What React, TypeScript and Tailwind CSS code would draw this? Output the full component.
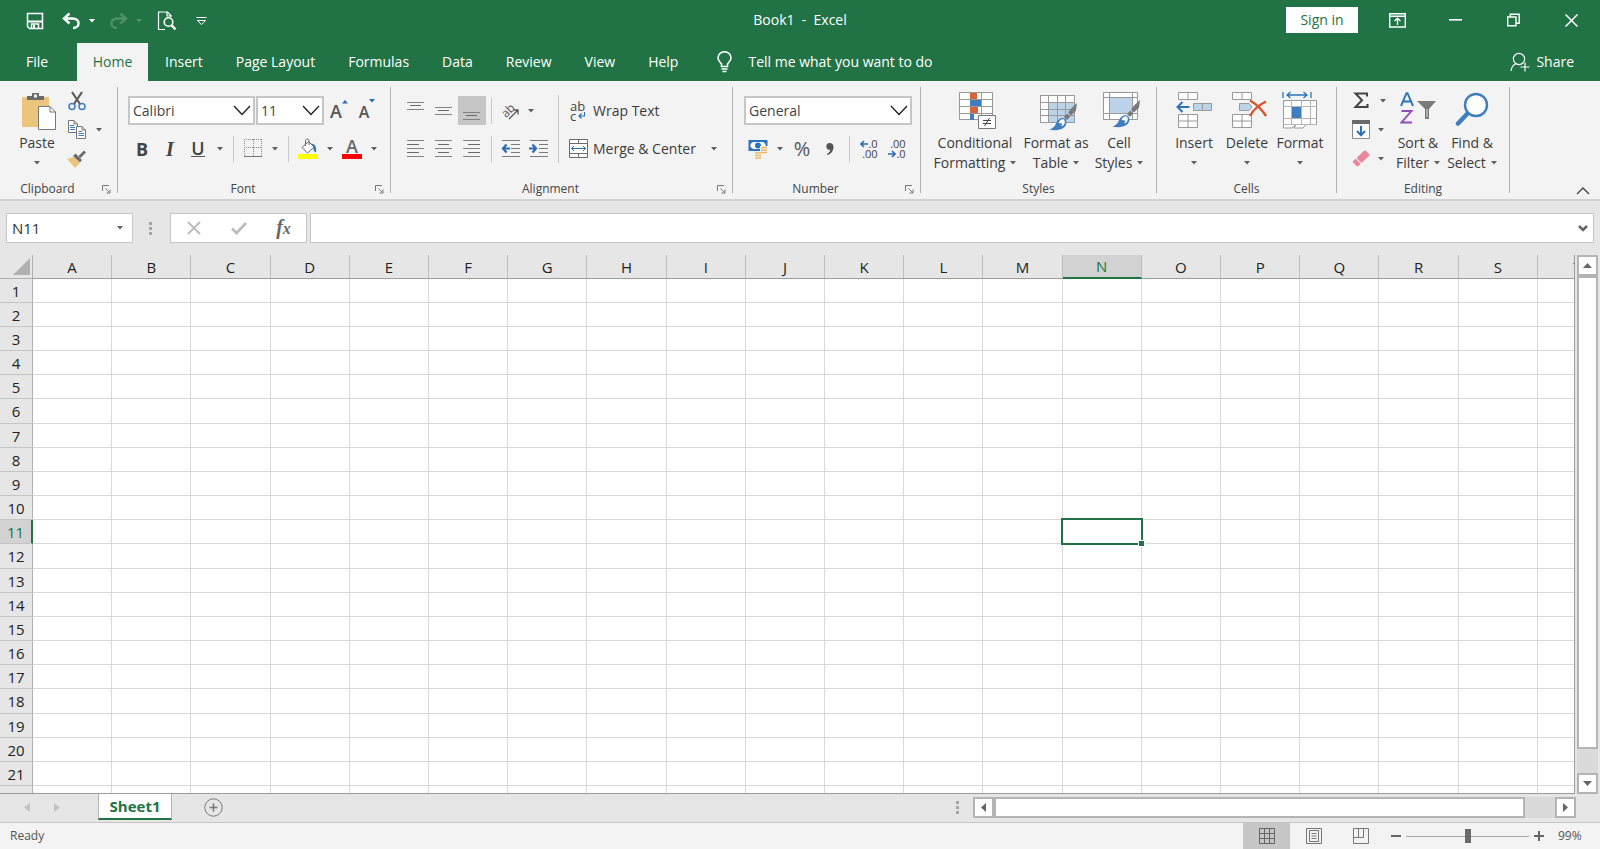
import type { ReactNode } from "react";
import clsx from "clsx";

const TABS = ["Insert", "Page Layout", "Formulas", "Data", "Review", "View", "Help"];
const COLUMNS = "ABCDEFGHIJKLMNOPQRS".split("");
const ROWS = Array.from({ length: 22 }, (_, i) => i + 1);
const SELECTED = { col: "N", row: 11 };

interface GroupProps {
    label: string;
    width: string;
    launcher?: boolean;
    children: ReactNode;
}

interface IconButtonProps {
    label: string;
    active?: boolean;
    children: ReactNode;
}

function Caret({ className = "text-[#5f5f5f]" }: { className?: string }) {
    return (
        <svg width="6" height="4" viewBox="0 0 6 4" className={clsx("shrink-0", className)}>
            <path d="M0 0H6L3 3.5Z" fill="currentColor" />
        </svg>
    );
}

function DropButton({ label, width = "w-4" }: { label: string; width?: string }) {
    return (
        <button aria-label={label} className={clsx("flex h-full shrink-0 items-center justify-center", width)}>
            <Caret />
        </button>
    );
}

function IconButton({ label, active, children }: IconButtonProps) {
    return (
        <button
            aria-label={label}
            className={clsx("flex h-full w-7 shrink-0 items-center justify-center", active && "bg-[#c6c6c6]")}
        >
            {children}
        </button>
    );
}

function Divider() {
    return <div className="mx-[5px] h-[26px] w-px shrink-0 bg-[#c8c8c8]" />;
}

function Group({ label, width, launcher, children }: GroupProps) {
    return (
        <section aria-label={label} className={clsx("flex shrink-0", width)}>
            <div className="flex min-w-0 flex-1 flex-col">
                <div className="flex h-[98px]">{children}</div>
                <div className="flex h-5 items-center">
                    <span className="flex-1 text-center text-xs text-[#444]">{label}</span>
                    {launcher && (
                        <button aria-label={`${label} settings`} className="flex w-[22px] justify-center">
                            <svg width="9" height="9" viewBox="0 0 9 9" fill="none" stroke="#777">
                                <path d="M.5 6V.5H7M3.5 3.5L7.5 7.5M8 4.5V8H4.5" />
                            </svg>
                        </button>
                    )}
                </div>
            </div>
            <div className="my-1.5 w-px bg-[#b0b0b0]" />
        </section>
    );
}

interface BigButtonProps {
    lines: string[];
    width: string;
    children: ReactNode;
}

function BigButton({ lines, width, children }: BigButtonProps) {
    return (
        <button className={clsx("flex shrink-0 flex-col items-center pt-2.5 text-sm leading-5 text-[#3b3b3b]", width)}>
            <span className="flex h-[42px] items-start">{children}</span>
            <span className="whitespace-nowrap">{lines[0]}</span>
            <span className="flex h-5 items-center gap-[5px] whitespace-nowrap">
                {lines[1]}
                <Caret />
            </span>
        </button>
    );
}

interface ComboProps {
    label: string;
    value: string;
    width: string;
}

function Combo({ label, value, width }: ComboProps) {
    return (
        <div className={clsx("relative h-full shrink-0", width)}>
            <select
                aria-label={label}
                defaultValue={value}
                className="h-full w-full appearance-none border-2 border-[#c6c6c6] bg-white px-[3px] text-sm text-[#444] outline-none"
            >
                <option>{value}</option>
            </select>
            <svg
                width="18"
                height="11"
                viewBox="0 0 18 11"
                fill="none"
                stroke="#222"
                strokeWidth="1.4"
                className="pointer-events-none absolute top-[9px] right-1"
            >
                <path d="M1 1L9 9.4L17 1" />
            </svg>
        </div>
    );
}

// Horizontal strokes given as [x1, x2, y]
function Lines({ lines }: { lines: number[][] }) {
    return (
        <svg width="18" height="20" viewBox="0 0 18 20">
            {lines.map(([a, b, y], i) => (
                <rect key={i} x={a} y={y} width={b - a} height="1" fill={i % 2 ? "#6a6a6a" : "#828282"} />
            ))}
        </svg>
    );
}

function IndentIcon({ out }: { out?: boolean }) {
    return (
        <svg width="20" height="20" viewBox="0 0 20 20" fill="#7c7c7c">
            <path d="M1 1H19V2H1ZM10 5H19V6H10ZM10 9H19V10H10ZM10 13H19V14H10ZM1 17H19V18H1Z" />
            <path
                d={out ? "M9 9.5H2M5.5 5.5L2 9.5L5.5 13.5" : "M0 9.5H7M3.5 5.5L7 9.5L3.5 13.5"}
                fill="none"
                stroke="#2b6cb0"
                strokeWidth="2.2"
            />
        </svg>
    );
}

function PaintBrush() {
    return (
        <g>
            <path d="M37 9L31.5 14L28 18.5L31 21.5L36 16.5Z" fill="#7a7a7a" />
            <path d="M27.3 19.4L23.8 23L27 26L30.2 22.4Z" fill="#7a7a7a" />
            <path d="M23 24C20 24 17.5 26 16.2 29C15 32 13 34.5 9.5 35.8C16 37 22 36 25 32.5C27.5 29.5 27 25.5 23 24Z" fill="#3f7dbf" />
            <path d="M23 25C20.8 25.2 19.3 26.8 18.5 29L22 29.5L21.5 32.5C24.5 31.5 26.5 27.5 23 25Z" fill="#fff" />
        </g>
    );
}

function SmallArrowText({ out }: { out?: boolean }) {
    const arrow = (
        <svg width="8" height="8" viewBox="0 0 8 8" fill="none" stroke="#2b6cb0" strokeWidth="1.6">
            <path d={out ? "M0 4H7M4 1L7 4L4 7" : "M8 4H1M4 1L1 4L4 7"} />
        </svg>
    );
    return (
        <span className="flex flex-col items-end text-[11px] leading-[10px] text-[#444]">
            <span className="flex items-center">{out ? ".00" : <>{arrow}.0</>}</span>
            <span className="flex items-center">{out ? <>{arrow}.0</> : ".00"}</span>
        </span>
    );
}

function TitleBar() {
    return (
        <div className="flex h-[43px] items-start justify-between text-white">
            <div className="flex h-[42px] flex-1 items-center">
                <button aria-label="Save" className="ml-[25px] flex w-5 justify-center">
                    <svg width="18" height="18" viewBox="0 0 18 18" fill="none" stroke="#fff" strokeWidth="1.5">
                        <path d="M1.5 1.5H16.5V16.5H3.5L1.5 14.5Z" />
                        <path d="M2 9.5H16" strokeWidth="2" />
                        <path d="M5.5 16.5V12H12.5V16.5" />
                        <path d="M8 13V16.5" strokeWidth="2" />
                    </svg>
                </button>
                <button aria-label="Undo" className="ml-4 flex w-5 justify-center">
                    <svg width="19" height="18" viewBox="0 0 19 18" fill="none" stroke="#fff" strokeWidth="2.4">
                        <path d="M7.5 1.5L2 6.5L7.5 11.5M2 6.5H10.5C18.5 6.5 18.5 15.8 11 16" />
                    </svg>
                </button>
                <button aria-label="Undo history" className="ml-[7px] flex w-2 justify-center">
                    <Caret className="text-white" />
                </button>
                <button aria-label="Redo" className="ml-3 flex w-5 justify-center text-[#4f9069]">
                    <svg width="19" height="18" viewBox="0 0 19 18" fill="none" stroke="currentColor" strokeWidth="2.4">
                        <path d="M11.5 1.5L17 6.5L11.5 11.5M17 6.5H8.5C.5 6.5 .5 15.8 8 16" />
                    </svg>
                </button>
                <button aria-label="Redo history" className="ml-[7px] flex w-2 justify-center">
                    <Caret className="text-[#4f9069]" />
                </button>
                <button aria-label="Print preview" className="ml-3.5 flex w-5 justify-center">
                    <svg width="20" height="20" viewBox="0 0 20 20" fill="none" stroke="#fff">
                        <path d="M8 18.5H1.5V1H10.5L14 4.5V6M10 1V5H14" strokeWidth="1.2" />
                        <circle cx="11.5" cy="11" r="4.3" strokeWidth="1.6" />
                        <path d="M14.5 14.2L18.5 18.4" strokeWidth="2.4" />
                    </svg>
                </button>
                <button aria-label="Customize toolbar" className="ml-[18px] flex w-3 justify-center">
                    <svg width="11" height="9" viewBox="0 0 11 9" fill="none" stroke="#fff">
                        <path d="M.5 .5H10.5M1.5 3.5H9.5L5.5 7.7Z" />
                    </svg>
                </button>
            </div>
            <h1 className="text-sm leading-10 whitespace-pre">Book1  -  Excel</h1>
            <div className="flex h-10 flex-1 items-center justify-end">
                <button className="mr-2.5 h-[26px] w-[72px] bg-white text-sm text-[#217346]">Sign in</button>
                <button aria-label="Ribbon display options" className="flex w-[58px] justify-center">
                    <svg width="17" height="15" viewBox="0 0 17 15" fill="none" stroke="#fff" strokeWidth="1.4">
                        <path d="M.7 .7H16.3V14H.7ZM.7 3.2H16.3M8.5 12V5.5M5.5 8L8.5 5.3L11.5 8" />
                    </svg>
                </button>
                <button aria-label="Minimize" className="flex w-[58px] justify-center">
                    <svg width="13" height="2" viewBox="0 0 13 2">
                        <rect width="13" height="1.6" fill="#fff" />
                    </svg>
                </button>
                <button aria-label="Restore" className="flex w-[58px] justify-center">
                    <svg width="13" height="14" viewBox="0 0 13 14" fill="none" stroke="#fff" strokeWidth="1.4">
                        <path d="M.7 4H9V12.7H.7ZM3.2 4V1.2H12.2V10.2H9" />
                    </svg>
                </button>
                <button aria-label="Close" className="flex w-[58px] justify-center">
                    <svg width="13" height="13" viewBox="0 0 13 13" stroke="#fff" strokeWidth="1.5">
                        <path d="M.5 .5L12.5 12.5M12.5 .5L.5 12.5" />
                    </svg>
                </button>
            </div>
        </div>
    );
}

function TabBar() {
    return (
        <nav className="flex h-[38px] items-stretch gap-px text-sm text-white">
            <button className="w-[74px]">File</button>
            <button className="ml-0.5 w-[71px] bg-[#f3f3f3] text-[#217346]">Home</button>
            {TABS.map((tab) => (
                <button key={tab} className="px-4 whitespace-nowrap">
                    {tab}
                </button>
            ))}
            <button className="ml-[22px] flex items-center gap-4">
                <svg width="15" height="22" viewBox="0 0 15 22" fill="none" stroke="#fff" strokeWidth="1.6">
                    <path d="M4.5 15.5V13C3.5 11.3 1 10 1 7A6.4 6.2 0 0 1 14 7C14 10 11.5 11.3 10.5 13V15.5Z" />
                    <path d="M4.5 18H10.5M5.5 20.5H9.5" />
                </svg>
                Tell me what you want to do
            </button>
            <button className="mr-[26px] ml-auto flex items-center gap-1.5">
                <svg width="20" height="20" viewBox="0 0 20 20" fill="none" stroke="#fff" strokeWidth="1.2">
                    <circle cx="9" cy="7" r="5.6" />
                    <path d="M1 19C1.5 15 3 13 5.5 12M15 10.5V19.5M10.5 15H19.5" />
                </svg>
                Share
            </button>
        </nav>
    );
}

function ClipboardGroup() {
    return (
        <Group label="Clipboard" width="w-[118px]" launcher>
            <div className="pl-3.5">
                <BigButton lines={["Paste"]} width="w-[46px]">
                    <svg width="36" height="40" viewBox="0 0 36 40" className="ml-1">
                        <path d="M1 6H28V36H1Z" fill="#ecc57c" />
                        <path d="M6 9V5H11V2H18V5H23V9Z" fill="#6b6b6b" />
                        <rect x="13" y="3.5" width="3" height="3" fill="#f3f3f3" />
                        <path d="M17.5 15.5H29L34.5 21V38.5H17.5Z" fill="#fff" stroke="#777" />
                        <path d="M29 15.5V21H34.5" fill="none" stroke="#777" />
                    </svg>
                </BigButton>
            </div>
            <div className="flex flex-col pt-[5px] pl-[3px]">
                <div className="flex h-[29px]">
                    <IconButton label="Cut">
                        <svg width="18" height="20" viewBox="0 0 18 20" fill="none">
                            <path d="M4 1L12 13M14 1L6 13" stroke="#5a5a5a" strokeWidth="2.2" />
                            <circle cx="4" cy="15.5" r="3" stroke="#3f7dbf" strokeWidth="1.5" />
                            <circle cx="14" cy="15.5" r="3" stroke="#3f7dbf" strokeWidth="1.5" />
                        </svg>
                    </IconButton>
                </div>
                <div className="flex h-[29px]">
                    <IconButton label="Copy">
                        <svg width="18" height="19" viewBox="0 0 18 19" fill="#fff" stroke="#777">
                            <path d="M.5 .5H6L9.5 4V12.5H.5ZM6 .5V4H9.5" />
                            <path d="M8.5 6.5H14L17.5 10V18.5H8.5ZM14 6.5V10H17.5" />
                            <path d="M2 5.5H6M2 7.5H7M2 9.5H7M10.5 11.5H14M10.5 13.5H16M10.5 15.5H16" stroke="#3f7dbf" />
                        </svg>
                    </IconButton>
                    <DropButton label="Copy options" />
                </div>
                <div className="flex h-[29px]">
                    <IconButton label="Format Painter">
                        <svg width="20" height="18" viewBox="0 0 20 18">
                            <path d="M0 9L7 7L13 13L8 18Z" fill="#ecc57c" />
                            <path d="M6 6L8.5 3.5L15 10L13 12.5Z" fill="#6b6b6b" />
                            <path d="M11.5 6L17 0.5L19 2.5L13.5 8Z" fill="#6b6b6b" />
                        </svg>
                    </IconButton>
                </div>
            </div>
        </Group>
    );
}

function FontGroup() {
    return (
        <Group label="Font" width="w-[273px]" launcher>
            <div className="flex flex-col gap-[9px] pt-[15px] pl-2.5 text-[#444]">
                <div className="flex h-[29px] items-center">
                    <Combo label="Font" value="Calibri" width="w-[127px]" />
                    <div className="ml-px h-full">
                        <Combo label="Font size" value="11" width="w-[68px]" />
                    </div>
                    <IconButton label="Increase font size">
                        <span className="relative pr-1 text-lg leading-7 font-semibold text-[#555]">
                            A
                            <svg width="6" height="4" viewBox="0 0 6 4" className="absolute top-[3px] -right-0.5">
                                <path d="M0 3.5H6L3 0Z" fill="#2b6cb0" />
                            </svg>
                        </span>
                    </IconButton>
                    <IconButton label="Decrease font size">
                        <span className="relative pt-0.5 pr-1 text-base leading-7 font-semibold text-[#555]">
                            A
                            <svg width="6" height="4" viewBox="0 0 6 4" className="absolute top-[3px] -right-0.5">
                                <path d="M0 0H6L3 3.5Z" fill="#2b6cb0" />
                            </svg>
                        </span>
                    </IconButton>
                </div>
                <div className="flex h-[29px] items-center">
                    <IconButton label="Bold">
                        <span className="text-lg leading-5 font-bold">B</span>
                    </IconButton>
                    <IconButton label="Italic">
                        <span className="font-['Liberation_Serif',serif] text-xl leading-5 font-bold italic">I</span>
                    </IconButton>
                    <IconButton label="Underline">
                        <span className="border-b border-[#555] text-lg leading-4 font-semibold">U</span>
                    </IconButton>
                    <DropButton label="Underline options" />
                    <Divider />
                    <IconButton label="Borders">
                        <svg
                            width="18"
                            height="19"
                            viewBox="0 0 18 19"
                            fill="none"
                            stroke="#8a8a8a"
                            shapeRendering="crispEdges"
                        >
                            <path d="M0 .5H18M0 8.5H18M.5 0V17M9.5 0V17M17.5 0V17" strokeDasharray="1 1" />
                            <path d="M0 17.5H18" stroke="#777" />
                        </svg>
                    </IconButton>
                    <DropButton label="Border options" />
                    <Divider />
                    <IconButton label="Fill color">
                        <svg width="20" height="21" viewBox="0 0 20 21">
                            <path d="M4 9.5L10.5 3.5L16 9L9.5 15Z" fill="#fff" stroke="#666" />
                            <path d="M7.5 8V2.5C7.5 .5 11 .5 11 2.5V7" fill="none" stroke="#666" />
                            <path d="M13 5.5C17 6 18.8 8.5 18 14.5C15.5 13.5 15 11 16 9Z" fill="#2f75b5" />
                            <rect y="16" width="20" height="5" fill="#ff0" />
                        </svg>
                    </IconButton>
                    <DropButton label="Fill color options" />
                    <IconButton label="Font color">
                        <span className="w-5 border-b-[5px] border-[#f00] text-center text-lg leading-4 font-semibold text-[#666]">
                            A
                        </span>
                    </IconButton>
                    <DropButton label="Font color options" />
                </div>
            </div>
        </Group>
    );
}

function AlignmentGroup() {
    return (
        <Group label="Alignment" width="w-[342px]" launcher>
            <div className="flex flex-col gap-[9px] pt-[15px] pl-[11px]">
                <div className="flex h-[29px] items-center">
                    <IconButton label="Top align">
                        <Lines lines={[[0, 17, 1], [3, 14, 4], [0, 17, 8]]} />
                    </IconButton>
                    <IconButton label="Middle align">
                        <Lines lines={[[0, 17, 6], [3, 14, 9], [0, 17, 13]]} />
                    </IconButton>
                    <IconButton label="Bottom align" active>
                        <Lines lines={[[0, 17, 11], [3, 14, 14], [0, 17, 18]]} />
                    </IconButton>
                    <Divider />
                    <IconButton label="Orientation">
                        <svg width="20" height="20" viewBox="0 0 20 20" fill="none" stroke="#555">
                            <text x="1" y="14" fontSize="12" fill="#555" stroke="none" transform="rotate(-45 7 11)">
                                ab
                            </text>
                            <path d="M8 18L17 9M12.5 9H17V13.5" strokeWidth="1.3" />
                        </svg>
                    </IconButton>
                    <DropButton label="Orientation options" width="w-3" />
                </div>
                <div className="flex h-[29px] items-center">
                    <IconButton label="Align left">
                        <Lines lines={[[0, 17, 1], [0, 12, 5], [0, 17, 9], [0, 12, 13], [0, 17, 17]]} />
                    </IconButton>
                    <IconButton label="Center">
                        <Lines lines={[[0, 17, 1], [3, 14, 5], [0, 17, 9], [3, 14, 13], [0, 17, 17]]} />
                    </IconButton>
                    <IconButton label="Align right">
                        <Lines lines={[[0, 17, 1], [5, 17, 5], [0, 17, 9], [5, 17, 13], [0, 17, 17]]} />
                    </IconButton>
                    <Divider />
                    <IconButton label="Decrease indent">
                        <IndentIcon out />
                    </IconButton>
                    <IconButton label="Increase indent">
                        <IndentIcon />
                    </IconButton>
                </div>
            </div>
            <div className="mx-[5px] mt-3.5 h-[68px] w-px bg-[#c8c8c8]" />
            <div className="flex flex-col gap-[9px] pt-[15px] text-sm text-[#3b3b3b]">
                <button className="flex h-[29px] items-center">
                    <span className="flex w-7 flex-col pl-1.5 text-left text-[13px] leading-[10px] text-[#444]">
                        <span>ab</span>
                        <span className="flex items-center">
                            c
                            <svg width="7" height="7" viewBox="0 0 7 7" fill="none" stroke="#2b6cb0" className="ml-0.5">
                                <path d="M6.5 0V4H1M3.5 1.5L1 4L3.5 6.5" strokeWidth="1.2" />
                            </svg>
                        </span>
                    </span>
                    <span className="pl-px whitespace-nowrap">Wrap Text</span>
                </button>
                <div className="flex h-[29px] items-center">
                    <button className="flex h-full items-center">
                        <span className="flex w-7 justify-center">
                            <svg width="19" height="19" viewBox="0 0 19 19" fill="#fff" stroke="#6a6a6a">
                                <path d="M.5 .5H18.5V18.5H.5ZM.5 4.5H18.5M.5 14.5H18.5M9.5 .5V4.5M9.5 14.5V18.5" />
                                <path d="M2.5 9.5H16.5M5 7L2.5 9.5L5 12M14 7L16.5 9.5L14 12" fill="none" stroke="#2b6cb0" />
                            </svg>
                        </span>
                        <span className="pl-px whitespace-nowrap">Merge &amp; Center</span>
                    </button>
                    <div className="ml-2.5 h-full">
                        <DropButton label="Merge options" />
                    </div>
                </div>
            </div>
        </Group>
    );
}

function NumberGroup() {
    return (
        <Group label="Number" width="w-[188px]" launcher>
            <div className="flex flex-col gap-[9px] pt-[15px] pl-[11px] text-[#555]">
                <div className="h-[29px]">
                    <Combo label="Number format" value="General" width="w-[168px]" />
                </div>
                <div className="flex h-[29px] items-center">
                    <IconButton label="Accounting format">
                        <svg width="20" height="20" viewBox="0 0 20 20">
                            <path d="M.5 1H19.5V12H.5Z" fill="#2b74bd" />
                            <path d="M5 3H15L17.5 5V8L15 10H5L2.5 8V5Z" fill="#fff" />
                            <circle cx="10" cy="6.5" r="3" fill="#2b74bd" />
                            <path d="M12 7H20V16H14V20H6V12.5H12Z" fill="#f3f3f3" />
                            <path d="M13 8.5H19M13 11H19M13 13.5H19M7 14H13M7 16.5H13M7.5 19H13" stroke="#e9b968" strokeWidth="1.6" />
                        </svg>
                    </IconButton>
                    <DropButton label="Accounting options" />
                    <IconButton label="Percent style">
                        <span className="text-xl leading-6">%</span>
                    </IconButton>
                    <IconButton label="Comma style">
                        <svg width="8" height="12" viewBox="0 0 8 12">
                            <path d="M3.5 0C6 0 7.5 1.5 7.5 4C7.5 8 5 11 1.5 12L1 11C3 10 4.2 8.5 4.2 6.8C2 7.2 .3 5.5 .3 3.4C.3 1.5 1.6 0 3.5 0Z" fill="#555" />
                        </svg>
                    </IconButton>
                    <Divider />
                    <IconButton label="Increase decimal">
                        <SmallArrowText />
                    </IconButton>
                    <IconButton label="Decrease decimal">
                        <SmallArrowText out />
                    </IconButton>
                </div>
            </div>
        </Group>
    );
}

function StylesGroup() {
    return (
        <Group label="Styles" width="w-[236px]">
            <div className="flex pl-2">
                <BigButton lines={["Conditional", "Formatting"]} width="w-[92px]">
                    <svg width="38" height="38" viewBox="0 0 38 38" fill="none" stroke="#999" className="ml-1.5">
                        <path d="M.5 1.5H33.5V28.5H.5Z" fill="#fff" />
                        <path d="M.5 8.5H33.5M.5 15.5H33.5M.5 22.5H33.5M11.5 1.5V28.5M22.5 1.5V28.5" />
                        <g stroke="none">
                            <rect x="11" y="2" width="7" height="6" fill="#d9623b" />
                            <rect x="11" y="9" width="11" height="6" fill="#3f7dbf" />
                            <rect x="11" y="16" width="8" height="6" fill="#d9623b" />
                            <rect x="11" y="23" width="4" height="6" fill="#3f7dbf" />
                        </g>
                        <path d="M19.5 24.5H36.5V37.5H19.5Z" fill="#fff" stroke="#777" />
                        <path d="M24 29.5H32M24 32.5H32M30.5 27L25.5 35" stroke="#444" />
                    </svg>
                </BigButton>
                <BigButton lines={["Format as", "Table"]} width="w-[70px]">
                    <svg width="38" height="40" viewBox="0 0 38 40" fill="none" stroke="#999" className="ml-1.5">
                        <path d="M.5 4.5H34.5V31.5H.5Z" fill="#fff" />
                        <path d="M9 11H34.5V31.5H9Z" fill="#bdd3ea" stroke="none" />
                        <path d="M.5 4.5H34.5V31.5H.5ZM.5 11.5H34.5M.5 18.5H34.5M.5 24.5H34.5M8.5 4.5V31.5M17.5 4.5V31.5M25.5 4.5V31.5" />
                        <g stroke="none" transform="translate(0 3)">
                            <PaintBrush />
                        </g>
                    </svg>
                </BigButton>
                <BigButton lines={["Cell", "Styles"]} width="w-14">
                    <svg width="38" height="38" viewBox="0 0 38 38" fill="none" stroke="#999" className="ml-1.5">
                        <path d="M.5 1.5H34.5V28.5H.5Z" fill="#fff" />
                        <path d="M7 7H29V22H7Z" fill="#bdd3ea" stroke="none" />
                        <path d="M.5 6.5H34.5M.5 22.5H34.5M6.5 1.5V28.5M29.5 1.5V28.5" />
                        <g stroke="none">
                            <PaintBrush />
                        </g>
                    </svg>
                </BigButton>
            </div>
        </Group>
    );
}

function CellsGroup() {
    return (
        <Group label="Cells" width="w-[180px]">
            <div className="flex pl-[13px]">
                <BigButton lines={["Insert"]} width="w-12">
                    <svg width="36" height="38" viewBox="0 0 36 38" fill="#fff" stroke="#999">
                        <path d="M2.5 1.5H21.5V8.5H2.5ZM12 1.5V8.5M2.5 23.5H21.5V36.5H2.5ZM2.5 30H21.5M12 23.5V36.5" />
                        <path d="M17.5 12.5H35.5V19.5H17.5ZM26.5 12.5V19.5" fill="#bdd3ea" />
                        <path d="M13.5 16H2M6.5 11L1.5 16L6.5 21" fill="none" stroke="#2b74bd" strokeWidth="2" />
                    </svg>
                </BigButton>
                <BigButton lines={["Delete"]} width="w-[58px]">
                    <svg width="36" height="38" viewBox="0 0 36 38" fill="#fff" stroke="#999" className="ml-1">
                        <path d="M1.5 1.5H20.5V8.5H1.5ZM11 1.5V8.5M1.5 23.5H20.5V36.5H1.5ZM1.5 30H20.5M11 23.5V36.5" />
                        <path d="M8.5 12.5H18L21 16L18 19.5H8.5Z" fill="#bdd3ea" />
                        <path d="M19 9.5C25 13 31 18.5 35 25M35 10.5C29 13.5 22 19 19 25" fill="none" stroke="#d9552f" strokeWidth="2.4" />
                    </svg>
                </BigButton>
                <BigButton lines={["Format"]} width="w-12">
                    <svg width="36" height="38" viewBox="0 0 36 38" fill="none" stroke="#999">
                        <path d="M1 1V7M29 1V7M5 4H25M8.5 1L5 4L8.5 7M21.5 1L25 4L21.5 7" stroke="#2b74bd" strokeWidth="1.3" />
                        <path d="M1.5 9.5H34.5V33.5H24L21 37H12L14 33.5L10 37H1.5Z" fill="#fff" />
                        <path d="M1.5 15.5H34.5M1.5 27.5H34.5M1.5 33.5H34.5M9.5 9.5V33.5M19.5 9.5V33.5M28.5 9.5V33.5" stroke="#b4b4b4" />
                        <rect x="10" y="16" width="9" height="11" fill="#3f7dbf" stroke="none" />
                    </svg>
                </BigButton>
            </div>
        </Group>
    );
}

function EditingGroup() {
    return (
        <Group label="Editing" width="w-[173px]">
            <div className="flex flex-col pt-[5px] pl-2.5">
                <div className="flex h-[29px]">
                    <IconButton label="AutoSum">
                        <svg width="16" height="17" viewBox="0 0 16 17" fill="none" stroke="#444" strokeWidth="2">
                            <path d="M14 4.5V1.5H2.5L9 8.2L2.5 15H14.5V12" />
                        </svg>
                    </IconButton>
                    <DropButton label="AutoSum options" />
                </div>
                <div className="flex h-[29px]">
                    <IconButton label="Fill">
                        <svg width="18" height="19" viewBox="0 0 18 19" fill="#fff" stroke="#8a8a8a">
                            <path d="M.5 .5H17.5V18.5H.5Z" />
                            <rect width="18" height="4" fill="#6b6b6b" stroke="none" />
                            <path d="M9 6V15M5 11L9 15.2L13 11" fill="none" stroke="#2b74bd" strokeWidth="2" />
                        </svg>
                    </IconButton>
                    <DropButton label="Fill options" width="w-3" />
                </div>
                <div className="flex h-[29px]">
                    <IconButton label="Clear">
                        <svg width="18" height="17" viewBox="0 0 18 17" fill="#e8899b">
                            <path d="M4.5 8L12 .8Q13 0 14 .8L17 4Q17.6 5 17 6L9.5 13Z" />
                            <path d="M3.7 8.8L8.7 13.8L6.5 16Q5.5 16.8 4.5 16L1 12.5Q.3 11.5 1.2 10.8Z" />
                        </svg>
                    </IconButton>
                    <DropButton label="Clear options" width="w-3" />
                </div>
            </div>
            <div className="flex pl-1">
                <BigButton lines={["Sort &", "Filter"]} width="w-[46px]">
                    <svg width="36" height="36" viewBox="0 0 36 36" fill="none">
                        <path d="M1 15L6.5 2.2H7.5L13 15M3.2 10.5H10.8" stroke="#2b74bd" strokeWidth="1.9" />
                        <path d="M1.5 20H11.5L1.5 31.5H12" stroke="#8e4db8" strokeWidth="1.9" />
                        <path d="M17 10H36L29 18V28H25V18Z" fill="#7a7a7a" />
                        <path d="M27 18V26" stroke="#ddd" />
                    </svg>
                </BigButton>
                <BigButton lines={["Find &", "Select"]} width="w-[62px]">
                    <svg width="34" height="36" viewBox="0 0 34 36" fill="none" stroke="#3f7dbf">
                        <path d="M13 22L3 32.5" strokeWidth="4.5" strokeLinecap="round" />
                        <circle cx="21" cy="14" r="11" fill="#fff" strokeWidth="2.4" />
                    </svg>
                </BigButton>
            </div>
        </Group>
    );
}

function FormulaBar() {
    return (
        <div className="flex items-center px-1.5 py-3">
            <div className="flex h-[30px] w-[127px] items-center border border-[#c6c6c6] bg-white">
                <input
                    aria-label="Name box"
                    defaultValue="N11"
                    className="w-full min-w-0 flex-1 bg-transparent pl-[5px] text-[15px] text-[#333] outline-none"
                />
                <DropButton label="Named ranges" width="w-6" />
            </div>
            <svg width="3" height="13" viewBox="0 0 3 13" fill="#a5a5a5" className="mr-[18px] ml-4">
                <path d="M0 0H3V3H0ZM0 5H3V8H0ZM0 10H3V13H0Z" />
            </svg>
            <div className="flex h-[30px] w-[137px] items-center border border-[#c6c6c6] bg-white">
                <button aria-label="Cancel" className="flex flex-1 justify-center">
                    <svg width="14" height="14" viewBox="0 0 14 14" stroke="#bdbdbd" strokeWidth="2">
                        <path d="M1 1L13 13M13 1L1 13" />
                    </svg>
                </button>
                <button aria-label="Enter" className="flex flex-1 justify-center">
                    <svg width="16" height="13" viewBox="0 0 16 13" fill="none" stroke="#bdbdbd" strokeWidth="2.8">
                        <path d="M1 6.5L5.5 11L15 1" />
                    </svg>
                </button>
                <button
                    aria-label="Insert function"
                    className="flex-1 font-['Liberation_Serif',serif] text-xl leading-6 font-semibold text-[#666] italic"
                >
                    f<span className="text-base">x</span>
                </button>
            </div>
            <div className="ml-[3px] flex h-[30px] flex-1 items-center border border-[#c6c6c6] bg-white">
                <input aria-label="Formula" className="h-full flex-1 bg-transparent px-2 text-sm outline-none" />
                <button aria-label="Expand formula bar" className="flex w-5 justify-center">
                    <svg width="10" height="7" viewBox="0 0 10 7" fill="none" stroke="#666" strokeWidth="2.6">
                        <path d="M1 1L5 5L9 1" />
                    </svg>
                </button>
            </div>
        </div>
    );
}

function Sheet() {
    return (
        <div className="min-w-0 flex-1 overflow-hidden border-r border-b border-[#9c9c9c] bg-white">
            <table className="w-full table-fixed border-separate border-spacing-0 text-[15px] leading-5 text-[#222]">
                <thead>
                    <tr className="h-6 bg-[#e6e6e6]">
                        <th aria-label="Select all" className="w-[33px] border-r border-b border-[#b0b0b0] p-0">
                            <svg width="17" height="17" viewBox="0 0 17 17" className="ml-[13px]">
                                <path d="M17 0V17H0Z" fill="#b0b0b0" />
                            </svg>
                        </th>
                        {COLUMNS.map((col) => (
                            <th
                                key={col}
                                className={clsx(
                                    "border-r border-b border-r-[#bdbdbd] p-0 font-normal",
                                    col === SELECTED.col
                                        ? "border-b-2 border-b-[#217346] bg-[#d2d2d2] text-[#217346]"
                                        : "border-b-[#9c9c9c]",
                                )}
                            >
                                {col}
                            </th>
                        ))}
                        <th className="w-9 border-b border-[#9c9c9c] p-0 font-normal">
                            <div className="overflow-hidden">
                                <div className="w-[79px]">T</div>
                            </div>
                        </th>
                    </tr>
                </thead>
                <tbody>
                    {ROWS.map((row) => (
                        <tr key={row} className={row % 6 === 0 ? "h-[25px]" : "h-6"}>
                            <th
                                className={clsx(
                                    "border-r border-b border-b-[#c4c4c4] p-0 font-normal",
                                    row === SELECTED.row
                                        ? "border-r-2 border-r-[#217346] bg-[#d2d2d2] text-[#217346]"
                                        : "border-r-[#b0b0b0] bg-[#e6e6e6]",
                                )}
                            >
                                {row}
                            </th>
                            {COLUMNS.map((col) => (
                                <td key={col} className="relative border-r border-b border-[#d9d9d9] p-0">
                                    {row === SELECTED.row && col === SELECTED.col && (
                                        <div className="absolute -inset-0.5 z-10 border-2 border-[#217346]">
                                            <div className="absolute -right-1 -bottom-1 size-[7px] border border-white bg-[#217346]" />
                                        </div>
                                    )}
                                </td>
                            ))}
                            <td className="border-b border-[#d9d9d9] p-0" />
                        </tr>
                    ))}
                </tbody>
            </table>
        </div>
    );
}

function ScrollButton({ label, path }: { label: string; path: string }) {
    return (
        <button
            aria-label={label}
            className="flex size-[21px] shrink-0 items-center justify-center border-2 border-[#b4b4b4] bg-white"
        >
            <svg width="9" height="9" viewBox="0 0 9 9">
                <path d={path} fill="#666" />
            </svg>
        </button>
    );
}

function VerticalScroll() {
    return (
        <div className="mr-0.5 ml-0.5 flex w-[21px] flex-col bg-[#dadada]">
            <ScrollButton label="Scroll up" path="M0 7H9L4.5 2Z" />
            <div className="flex-1 border-2 border-[#b4b4b4] bg-white" />
            <div className="h-6" />
            <ScrollButton label="Scroll down" path="M0 2H9L4.5 7Z" />
        </div>
    );
}

function SheetTabs() {
    return (
        <div className="flex h-[29px] items-start border-b border-[#c6c6c6]">
            <div className="flex h-[27px] items-center gap-6 pr-[38px] pl-6">
                <button aria-label="Previous sheet">
                    <svg width="6" height="9" viewBox="0 0 6 9">
                        <path d="M6 0V9L0 4.5Z" fill="#c2c2c2" />
                    </svg>
                </button>
                <button aria-label="Next sheet">
                    <svg width="6" height="9" viewBox="0 0 6 9">
                        <path d="M0 0V9L6 4.5Z" fill="#c2c2c2" />
                    </svg>
                </button>
            </div>
            <button className="h-[26px] w-[74px] border-x border-b-2 border-x-[#b4b4b4] border-b-[#217346] bg-white text-[15px] leading-5 font-bold text-[#217346]">
                Sheet1
            </button>
            <button aria-label="New sheet" className="mt-1 ml-8">
                <svg width="19" height="19" viewBox="0 0 19 19" fill="none" stroke="#777">
                    <circle cx="9.5" cy="9.5" r="8.7" />
                    <path d="M9.5 5.5V13.5M5.5 9.5H13.5" strokeWidth="1.6" />
                </svg>
            </button>
            <div className="mt-[3px] mr-6 ml-auto flex w-[620px] items-center">
                <svg width="3" height="13" viewBox="0 0 3 13" fill="#a5a5a5" className="mr-3.5">
                    <path d="M0 0H3V3H0ZM0 5H3V8H0ZM0 10H3V13H0Z" />
                </svg>
                <div className="flex flex-1 bg-[#dadada]">
                    <ScrollButton label="Scroll left" path="M7 0V9L2 4.5Z" />
                    <div className="h-[21px] flex-1 border-2 border-[#b4b4b4] bg-white" />
                    <div className="w-[30px]" />
                    <ScrollButton label="Scroll right" path="M2 0V9L7 4.5Z" />
                </div>
            </div>
        </div>
    );
}

function StatusBar() {
    return (
        <footer className="flex h-[26px] items-center bg-[#f3f3f3] text-xs text-[#555]">
            <span className="pl-2.5">Ready</span>
            <div className="ml-auto flex h-full items-center">
                <button aria-label="Normal view" className="flex h-full w-[47px] items-center justify-center bg-[#c6c6c6]">
                    <svg width="16" height="16" viewBox="0 0 16 16" fill="none" stroke="#666">
                        <path d="M.5 .5H15.5V15.5H.5ZM.5 5.5H15.5M.5 10.5H15.5M5.5 .5V15.5M10.5 .5V15.5" />
                    </svg>
                </button>
                <button aria-label="Page layout view" className="flex w-[47px] justify-center">
                    <svg width="16" height="16" viewBox="0 0 16 16" fill="none" stroke="#777">
                        <path d="M.5 .5H15.5V15.5H.5ZM3.5 2.5H12.5V13.5H3.5ZM5.5 5.5H10.5M5.5 8H10.5M5.5 10.5H10.5" />
                    </svg>
                </button>
                <button aria-label="Page break preview" className="flex w-[47px] justify-center">
                    <svg width="16" height="16" viewBox="0 0 16 16" fill="none" stroke="#777">
                        <path d="M.5 .5H15.5V15.5H.5ZM5.5 .5V9.5M10.5 .5V9.5M.5 9.5H10.5" />
                    </svg>
                </button>
                <button aria-label="Zoom out" className="ml-[7px]">
                    <svg width="10" height="10" viewBox="0 0 10 10">
                        <rect y="4" width="10" height="2" fill="#666" />
                    </svg>
                </button>
                <input
                    type="range"
                    aria-label="Zoom"
                    min={0}
                    max={100}
                    defaultValue={50}
                    className="mx-[5px] h-px w-[123px] appearance-none bg-[#a5a5a5] [&::-webkit-slider-thumb]:h-3.5 [&::-webkit-slider-thumb]:w-1.5 [&::-webkit-slider-thumb]:appearance-none [&::-webkit-slider-thumb]:bg-[#6a6a6a]"
                />
                <button aria-label="Zoom in">
                    <svg width="10" height="10" viewBox="0 0 10 10">
                        <path d="M4 0H6V4H10V6H6V10H4V6H0V4H4Z" fill="#666" />
                    </svg>
                </button>
                <span className="w-14 pl-3.5">99%</span>
            </div>
        </footer>
    );
}

export default function App() {
    return (
        <div className="flex h-screen flex-col overflow-hidden bg-[#e6e6e6] font-['Open_Sans',sans-serif]">
            <header className="bg-[#217346]">
                <TitleBar />
                <TabBar />
            </header>
            <div className="flex border-b-2 border-[#d2d2d2] bg-[#f3f3f3]">
                <ClipboardGroup />
                <FontGroup />
                <AlignmentGroup />
                <NumberGroup />
                <StylesGroup />
                <CellsGroup />
                <EditingGroup />
                <button aria-label="Collapse ribbon" className="mr-2.5 mb-1 ml-auto self-end">
                    <svg width="14" height="8" viewBox="0 0 14 8" fill="none" stroke="#444" strokeWidth="1.4">
                        <path d="M1 7L7 1L13 7" />
                    </svg>
                </button>
            </div>
            <FormulaBar />
            <main className="flex min-h-0 flex-1">
                <Sheet />
                <VerticalScroll />
            </main>
            <SheetTabs />
            <StatusBar />
        </div>
    );
}
